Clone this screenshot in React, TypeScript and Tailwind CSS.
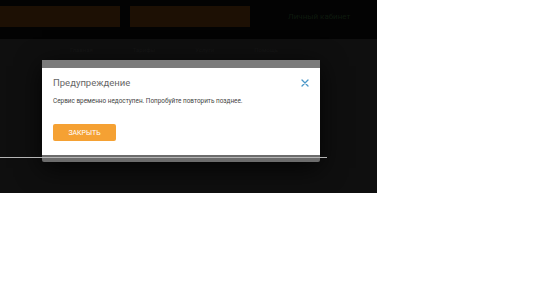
import React from "react";

export default function App() {
  return (
    <div className="w-[534px] h-[300px] bg-white relative" style={{ fontFamily: "Roboto, 'Liberation Sans', sans-serif" }}>
      <div className="w-[377px] h-[193px] bg-[#0f0f0f] flex flex-col relative overflow-hidden">
        <div className="h-[39px] bg-[#030303] flex items-start pt-[6px] gap-[10px]">
          <div className="w-[120px] h-[21px] bg-[#1d1004]" />
          <div className="w-[120px] h-[21px] bg-[#1d1004]" />
          <div className="ml-[28px] mt-[6px] text-[8px] leading-[10px] text-[#0e1a0e]">Личный кабинет</div>
        </div>
        <div className="h-[20px] flex items-center gap-[40px] pl-[70px] text-[6px] text-[#161616]">
          <span>Главная</span>
          <span>Тарифы</span>
          <span>Услуги</span>
          <span>Помощь</span>
        </div>

        <div className="absolute left-[42px] top-[60px] w-[278px] flex flex-col shadow-[0_6px_24px_rgba(0,0,0,0.8)]">
          <div className="h-[8px] bg-[#7b7b7b]" />
          <div className="bg-white h-[87px] px-[11px] pt-[8px] flex flex-col">
            <div className="flex items-center justify-between h-[14px]">
              <span className="text-[9.5px] leading-[14px] text-[#666]">Предупреждение</span>
              <svg width="8" height="8" viewBox="0 0 8 8">
                <path d="M1 1 L7 7 M7 1 L1 7" stroke="#4a97c8" strokeWidth="1.3" strokeLinecap="round" />
              </svg>
            </div>
            <div className="mt-[6px] text-[6.4px] leading-[10px] text-[#444]">
              Сервис временно недоступен. Попробуйте повторить позднее.
            </div>
            <div className="mt-[18px] w-[63px] h-[17px] rounded-[2px] bg-[#f5a133] flex items-center justify-center text-white text-[7px] leading-[10px]">
              ЗАКРЫТЬ
            </div>
          </div>
          <div className="h-[7px] bg-[#6c6c6c] rounded-b-[2px]" />
        </div>
        <div className="absolute left-0 top-[157px] w-[327px] h-[1px] bg-[#b5b5b5]" />
      </div>
    </div>
  );
}
